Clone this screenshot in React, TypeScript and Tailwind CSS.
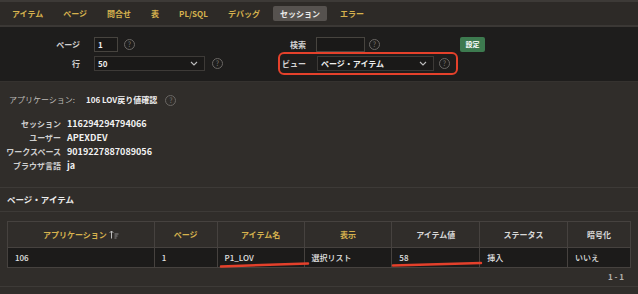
import React from "react";

const tabs = ["アイテム", "ページ", "問合せ", "表", "PL/SQL", "デバッグ", "セッション", "エラー"];

function Help({ className = "" }: { className?: string }) {
  return (
    <span
      className={`flex h-[11px] w-[11px] shrink-0 items-center justify-center rounded-full border border-[#6a6764] text-[7px] font-normal leading-none text-[#77736f] ${className}`}
    >
      ?
    </span>
  );
}

function Chevron() {
  return (
    <svg width="8" height="5" viewBox="0 0 8 5" className="ml-auto mr-[6px]">
      <path d="M1 1l3 3 3-3" fill="none" stroke="#bdbdbd" strokeWidth="1.1" />
    </svg>
  );
}

function SortIcon() {
  return (
    <svg width="10" height="9" viewBox="0 0 10 9" className="ml-[2px]">
      <path d="M2.5 8.5V1M0.8 2.8L2.5 1l1.7 1.8" fill="none" stroke="#bdbdbd" strokeWidth="1" />
      <path d="M5.5 4h4M5.5 6h3M5.5 8h2" stroke="#9a9a9a" strokeWidth="0.9" />
    </svg>
  );
}

const sessionRows = [
  ["セッション", "116294294794066"],
  ["ユーザー", "APEXDEV"],
  ["ワークスペース", "9019227887089056"],
  ["ブラウザ言語", "ja"],
];

const columns = [
  { label: "アプリケーション", w: "w-[147px]", sort: true, yellow: true },
  { label: "ページ", w: "w-[63px]", yellow: true },
  { label: "アイテム名", w: "w-[87px]", yellow: true },
  { label: "表示", w: "w-[88px]", yellow: true },
  { label: "アイテム値", w: "w-[88px]" },
  { label: "ステータス", w: "w-[88px]" },
  { label: "暗号化", w: "w-[63px]" },
];

const cells = ["106", "1", "P1_LOV", "選択リスト", "58", "挿入", "いいえ"];

export default function App() {
  return (
    <div className="h-[294px] w-[638px] overflow-hidden bg-[#302d2a] font-['Noto_Sans_CJK_JP','Noto_Sans',sans-serif] text-[#dcdcdc]">
      {/* tabs */}
      <div className="flex h-[27px] items-center gap-[6px] border-t-2 border-b-2 border-t-[#3d3a37] border-b-[#3b3835] bg-[#2d2a27] pl-[5px] text-[8px] font-bold">
        {tabs.map((t) => (
          <span
            key={t}
            className={
              t === "セッション"
                ? "flex h-[15px] items-center rounded-[2px] bg-[#56524f] px-[7px] text-[#ececec]"
                : "px-[7px] text-[#d6b24e]"
            }
          >
            {t}
          </span>
        ))}
      </div>

      {/* form */}
      <div className="h-[54px] bg-[#1e1d1c] pt-[10px] text-[8px] font-bold text-[#d2d2d2]">
        <div className="flex h-[15px] items-center">
          <span className="w-[80px] text-right">ページ</span>
          <div className="ml-[14px] flex h-[15px] w-[24px] items-center border border-[#47443f] bg-[#1a1918] pl-[3px] text-[#eee]">1</div>
          <Help className="ml-[6px]" />
          <span className="ml-[155px]">検索</span>
          <div className="ml-[10px] h-[15px] w-[49px] border border-[#47443f] bg-[#1a1918]" />
          <Help className="ml-[4px]" />
          <button className="ml-[80px] flex h-[15px] w-[25px] items-center justify-center rounded-[2px] bg-[#3d7a4f] text-[7px] text-white">
            設定
          </button>
        </div>
        <div className="flex h-[23px] items-center">
          <span className="w-[80px] text-right">行</span>
          <div className="ml-[14px] flex h-[15px] w-[111px] items-center border border-[#3d3a37] bg-[#1a1918] pl-[3px] text-[#eee]">
            50
            <Chevron />
          </div>
          <Help className="ml-[7px]" />
          <div className="ml-[55px] flex h-[23px] w-[180px] items-center rounded-[6px] border-2 border-[#e5412b] pl-[2px]">
            <span className="w-[35px]">ビュー</span>
            <div className="flex h-[15px] w-[117px] items-center border border-[#3d3a37] bg-[#1a1918] pl-[3px] text-[#eee]">
              ページ・アイテム
              <Chevron />
            </div>
            <Help className="ml-[5px]" />
          </div>
        </div>
      </div>

      {/* info */}
      <div className="h-[106px] border-t border-[#35322f] pt-[12px]">
        <div className="flex h-[12px] items-center text-[8px]">
          <span className="ml-[9px] w-[77px] text-[#bdbab6]">アプリケーション:</span>
          <span className="font-bold text-[#f0f0f0]">106 LOV戻り値確認</span>
          <Help className="ml-[8px]" />
        </div>
        <div className="mt-[11px] grid grid-cols-[61px_auto] gap-x-[6px] text-[8px] font-bold">
          {sessionRows.map(([k, v]) => (
            <React.Fragment key={k}>
              <span className="flex h-[14px] items-center justify-end whitespace-nowrap text-[#cfcfcf]">{k}</span>
              <span className="flex h-[14px] items-center text-[9px] text-[#f2f2f2]">{v}</span>
            </React.Fragment>
          ))}
        </div>
      </div>

      {/* page items */}
      <div className="flex h-[25px] items-center border-t border-b border-[#3d3a37] pl-[7px] text-[8.5px] font-bold text-[#ececec]">
        ページ・アイテム
      </div>

      <div className="relative mx-[7px] mt-[9px]">
        <table className="border-collapse text-[8px] font-bold">
          <thead>
            <tr className="h-[26px]">
              {columns.map((c) => (
                <th
                  key={c.label}
                  className={`${c.w} border border-[#46423f] p-0 font-bold ${c.yellow ? "text-[#d6b24e]" : "text-[#d8d8d8]"}`}
                >
                  <span className="inline-flex items-center">
                    {c.label}
                    {c.sort && <SortIcon />}
                  </span>
                </th>
              ))}
            </tr>
          </thead>
          <tbody>
            <tr className="h-[20px] bg-[#1c1b1a]">
              {cells.map((v, i) => (
                <td key={i} className="border border-[#46423f] px-[7px] py-0 text-left font-medium text-[#e2e2e2]">
                  {v}
                </td>
              ))}
            </tr>
          </tbody>
        </table>
        <svg className="pointer-events-none absolute left-0 top-0" width="624" height="50">
          <path d="M214 45.5L301 42.5" stroke="#e4402b" strokeWidth="2.5" strokeLinecap="round" fill="none" />
          <path d="M386 44.5L474 42" stroke="#e4402b" strokeWidth="2.5" strokeLinecap="round" fill="none" />
        </svg>
      </div>

      <div className="flex h-[18px] items-center justify-end pr-[14px] text-[8px] font-bold text-[#b5b2ae]">1 - 1</div>
      <div className="border-t border-[#3d3a37]" />
    </div>
  );
}
